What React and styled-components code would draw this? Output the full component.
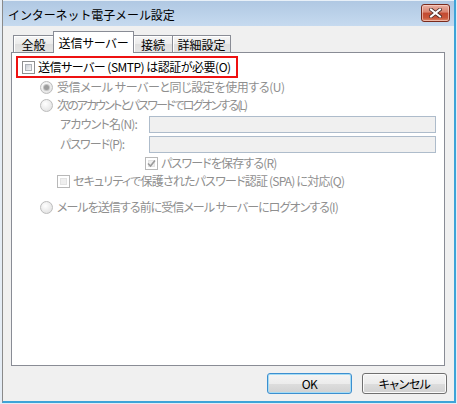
import styled, { createGlobalStyle } from "styled-components";

const GlobalStyle = createGlobalStyle`
  html, body {
    margin: 0;
    padding: 0;
    background: #e4ecf5;
  }
  body {
    font-family: "Noto Sans CJK JP", "Noto Sans", sans-serif;
    font-size: 12px;
    color: #000;
  }
`;

const Screen = styled.div`
  width: 457px;
  height: 404px;
  padding: 0 1px 1px 2px;
  box-sizing: border-box;
`;

const Window = styled.div`
  height: 403px;
  box-sizing: border-box;
  display: flex;
  flex-direction: column;
  background: #f0f0f0;
  border-left: 1px solid #8a8a8a;
  border-right: 2px solid #3ea4d8;
  border-bottom: 2px solid #3ea4d8;
`;

const TitleBar = styled.div`
  height: 26px;
  flex: none;
  display: flex;
  align-items: center;
  justify-content: space-between;
  padding: 2px 4px 0 5px;
  box-sizing: border-box;
  background: linear-gradient(#b0c8e3, #bdd3ea 60%, #c6daef);
  border-top: 1px solid #e8f0f8;
`;

const Title = styled.span`
  font-size: 12px;
  line-height: 16px;
  letter-spacing: -0.1px;
`;

const CloseButton = styled.div`
  width: 29px;
  height: 18px;
  margin-top: -4px;
  box-sizing: border-box;
  border: 1px solid #7a2a1c;
  border-radius: 3px;
  display: flex;
  align-items: center;
  justify-content: center;
  background: linear-gradient(#eab1a4, #d9836f 45%, #c24a31 50%, #c9563a 80%, #de8a6c);
  box-shadow: inset 0 0 0 1px rgba(255, 220, 210, 0.6);
`;

const Body = styled.div`
  flex: 1;
  display: flex;
  flex-direction: column;
  padding: 5px 9px 0 8px;
`;

const TabStrip = styled.div`
  height: 21px;
  display: flex;
  align-items: flex-end;
  padding-left: 2px;
  position: relative;
  z-index: 1;
`;

const Tab = styled.div`
  width: ${(p) => p.$w}px;
  height: ${(p) => (p.$active ? 22 : 17)}px;
  margin-bottom: ${(p) => (p.$active ? -1 : 0)}px;
  margin-left: -1px;
  box-sizing: border-box;
  border: 1px solid #898c95;
  border-bottom: none;
  display: flex;
  align-items: center;
  justify-content: center;
  padding-top: ${(p) => (p.$active ? 0 : 1)}px;
  font-size: 12px;
  line-height: 14px;
  font-feature-settings: "palt";
  background: ${(p) =>
    p.$active ? "#ffffff" : "linear-gradient(#f6f6f6, #ebebeb 50%, #dedede 51%, #e5e5e5)"};
  box-shadow: ${(p) => (p.$active ? "none" : "inset 1px 1px 0 #ffffff")};
  position: relative;
  z-index: ${(p) => (p.$active ? 2 : 1)};
  &:first-child {
    margin-left: 0;
  }
`;

const Panel = styled.div`
  height: 314px;
  flex: none;
  box-sizing: border-box;
  border: 1px solid #898c95;
  background: #ffffff;
  padding: 3px 8px 0 4px;
`;

const AuthBox = styled.div`
  width: 222px;
  height: 22px;
  box-sizing: border-box;
  border: 2px solid #ee1111;
  display: flex;
  align-items: center;
  gap: 3px;
  padding-left: 4px;
`;

const Options = styled.div`
  padding-left: 24px;
`;

const Row = styled.div`
  height: ${(p) => p.$h || 18}px;
  display: flex;
  align-items: center;
  gap: ${(p) => p.$gap || 4}px;
  padding-left: ${(p) => p.$indent || 0}px;
  margin-top: ${(p) => p.$mt || 0}px;
`;

const Text = styled.span`
  font-size: 12px;
  line-height: 16px;
  white-space: nowrap;
  font-feature-settings: "palt";
  letter-spacing: ${(p) => p.$ls || 0}px;
  color: ${(p) => (p.$disabled ? "#8f8f8f" : "#000")};
`;

const CheckBox = styled.span`
  width: 13px;
  height: 13px;
  flex: none;
  box-sizing: border-box;
  border: 1px solid ${(p) => (p.$disabled ? "#b8b8b8" : "#8e8f8f")};
  background: #ffffff;
  display: flex;
  align-items: center;
  justify-content: center;
  position: relative;
  &::before {
    content: "";
    position: absolute;
    inset: 2px;
    background: ${(p) =>
      p.$disabled ? "#efefef" : "linear-gradient(135deg, #cbcfd5, #f6f6f6)"};
    border: 1px solid ${(p) => (p.$disabled ? "#e3e3e3" : "#aeb3b9")};
    box-sizing: border-box;
  }
  svg {
    position: relative;
  }
`;

const Radio = styled.span`
  width: 13px;
  height: 13px;
  flex: none;
  box-sizing: border-box;
  border-radius: 50%;
  border: 1px solid #bcbcbc;
  background: radial-gradient(circle at 40% 35%, #ffffff, #e6e6e6 70%, #d8d8d8);
  display: flex;
  align-items: center;
  justify-content: center;
  &::after {
    content: "";
    display: ${(p) => (p.$checked ? "block" : "none")};
    width: 5px;
    height: 5px;
    border-radius: 50%;
    background: #9c9c9c;
    box-shadow: 0 0 0 1px #c4c4c4;
  }
`;

const FieldLabel = styled.span`
  width: 85px;
  flex: none;
  font-size: 12px;
  line-height: 16px;
  white-space: nowrap;
  font-feature-settings: "palt";
  letter-spacing: ${(p) => p.$ls || 0}px;
  color: #8f8f8f;
`;

const TextBox = styled.div`
  width: 289px;
  height: 17px;
  box-sizing: border-box;
  border: 1px solid #aebccb;
  background: #f0f0f0;
`;

const ButtonBar = styled.div`
  display: flex;
  justify-content: flex-end;
  gap: 10px;
  margin-top: 7px;
  margin-right: -2px;
`;

const Button = styled.div`
  width: 85px;
  height: 21px;
  box-sizing: border-box;
  border: 1px solid ${(p) => (p.$default ? "#3c8fd0" : "#707070")};
  border-radius: 3px;
  display: flex;
  align-items: center;
  justify-content: center;
  font-size: 12px;
  line-height: 14px;
  font-feature-settings: "palt";
  letter-spacing: -0.5px;
  background: linear-gradient(#f4f4f4, #ececec 50%, #dddddd 51%, #d1d1d1);
  box-shadow: ${(p) =>
    p.$default ? "inset 0 0 0 1px #a6dcf4" : "inset 0 0 0 1px #fbfbfb"};
`;

function CheckMark() {
  return (
    <svg width="9" height="9" viewBox="0 0 9 9">
      <path d="M1 4.5 L3.5 7 L8 1.5" fill="none" stroke="#9a9a9a" strokeWidth="1.6" />
    </svg>
  );
}

function CloseGlyph() {
  return (
    <svg width="13" height="10" viewBox="0 0 13 10">
      <path
        d="M2 1.5 L11 8.5 M11 1.5 L2 8.5"
        stroke="#4a2a25"
        strokeWidth="3.6"
        strokeLinecap="square"
      />
      <path
        d="M2 1.5 L11 8.5 M11 1.5 L2 8.5"
        stroke="#ffffff"
        strokeWidth="2"
        strokeLinecap="square"
      />
    </svg>
  );
}

function App() {
  return (
    <>
      <GlobalStyle />
      <Screen>
        <Window>
          <TitleBar>
            <Title>インターネット電子メール設定</Title>
            <CloseButton>
              <CloseGlyph />
            </CloseButton>
          </TitleBar>
          <Body>
            <TabStrip>
              <Tab $w={41}>全般</Tab>
              <Tab $w={81} $active>
                送信サーバー
              </Tab>
              <Tab $w={40}>接続</Tab>
              <Tab $w={59}>詳細設定</Tab>
            </TabStrip>
            <Panel>
              <AuthBox>
                <CheckBox />
                <Text $ls={-0.5}>送信サーバー (SMTP) は認証が必要(O)</Text>
              </AuthBox>
              <Options>
                <Row>
                  <Radio $checked />
                  <Text $disabled $ls={-0.4}>
                    受信メール サーバーと同じ設定を使用する(U)
                  </Text>
                </Row>
                <Row>
                  <Radio />
                  <Text $disabled $ls={-1.9}>
                    次のアカウントとパスワードでログオンする(L)
                  </Text>
                </Row>
                <Row $h={20} $gap={0} $indent={20}>
                  <FieldLabel $ls={-0.8}>アカウント名(N):</FieldLabel>
                  <TextBox />
                </Row>
                <Row $h={20} $gap={0} $indent={20}>
                  <FieldLabel $ls={-1}>パスワード(P):</FieldLabel>
                  <TextBox />
                </Row>
                <Row $indent={105} $gap={3}>
                  <CheckBox $disabled>
                    <CheckMark />
                  </CheckBox>
                  <Text $disabled $ls={-0.85}>
                    パスワードを保存する(R)
                  </Text>
                </Row>
                <Row $indent={17} $gap={3}>
                  <CheckBox $disabled />
                  <Text $disabled $ls={-0.8}>
                    セキュリティで保護されたパスワード認証 (SPA) に対応(Q)
                  </Text>
                </Row>
                <Row $mt={8}>
                  <Radio />
                  <Text $disabled $ls={-0.95}>
                    メールを送信する前に受信メール サーバーにログオンする(I)
                  </Text>
                </Row>
              </Options>
            </Panel>
            <ButtonBar>
              <Button $default>OK</Button>
              <Button>キャンセル</Button>
            </ButtonBar>
          </Body>
        </Window>
      </Screen>
    </>
  );
}

export default App;
